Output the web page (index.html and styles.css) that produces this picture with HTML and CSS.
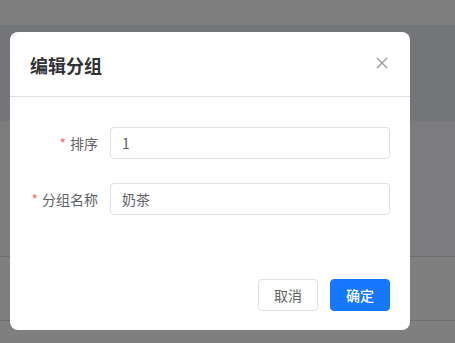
FILE: index.html
```html
<!DOCTYPE html>
<html lang="zh">
<head>
<meta charset="utf-8">
<link rel="stylesheet" href="styles.css">
</head>
<body>
<div class="page">
  <div class="topbar"></div>
  <div class="thead"></div>
  <div class="row row-tall"></div>
  <div class="row row-mid"></div>
  <div class="row row-last"></div>
</div>
<div class="mask">
  <div class="dialog">
    <div class="dialog-header">
      <span class="dialog-title">编辑分组</span>
      <svg class="close" width="12" height="12" viewBox="0 0 12 12"><path d="M1 1L11 11M11 1L1 11" stroke="#909399" stroke-width="1.2" fill="none"/></svg>
    </div>
    <div class="dialog-body">
      <div class="form-item">
        <label class="form-label"><span class="req">*</span>排序</label>
        <div class="input">1</div>
      </div>
      <div class="form-item">
        <label class="form-label"><span class="req">*</span>分组名称</label>
        <div class="input">奶茶</div>
      </div>
    </div>
    <div class="dialog-footer">
      <button class="btn">取消</button>
      <button class="btn btn-primary">确定</button>
    </div>
  </div>
</div>
</body>
</html>
```
FILE: styles.css
```css
* { box-sizing: border-box; }
html, body { margin: 0; padding: 0; overflow: hidden; }
body {
  width: 455px;
  height: 343px;
  font-family: "Noto Sans CJK SC", "Liberation Sans", sans-serif;
  position: relative;
  background: #fff;
}
.page { display: flex; flex-direction: column; height: 343px; overflow: hidden; }
.topbar { height: 25px; flex: none; background: #ffffff; }
.thead { height: 96px; flex: none; background: #e8ebf2; border-bottom: 1px solid #ebeef5; }
.row { height: 64px; flex: none; background: #fff; border-bottom: 1px solid #d8dce6; }
.row-tall { height: 136px; background: #f8f9fc; }
.row-last { flex: 1; border-bottom: none; }
.mask {
  position: absolute;
  inset: 0;
  background: rgba(0, 0, 0, 0.5);
  padding: 32px 0 0 10px;
}
.dialog {
  width: 400px;
  background: #fff;
  border-radius: 8px;
  overflow: hidden;
}
.dialog-header {
  height: 65px;
  padding: 0 22px 0 20px;
  display: flex;
  align-items: center;
  justify-content: space-between;
  border-bottom: 1px solid #dcdfe6;
}
.dialog-title {
  font-size: 18px;
  font-weight: 700;
  color: #303133;
  line-height: 24px;
  margin-top: 2px;
}
.close { display: block; margin-top: -3px; }
.dialog-body {
  padding: 30px 20px 0 20px;
  display: flex;
  flex-direction: column;
  gap: 24px;
}
.form-item { display: flex; align-items: center; height: 32px; }
.form-label {
  width: 80px;
  padding-right: 12px;
  text-align: right;
  font-size: 14px;
  color: #606266;
  line-height: 32px;
}
.req { color: #f56c6c; margin-right: 4px; }
.input {
  flex: 1;
  height: 32px;
  border: 1px solid #dcdfe6;
  border-radius: 4px;
  padding: 0 11px;
  font-size: 14px;
  color: #606266;
  line-height: 30px;
}
.dialog-footer {
  display: flex;
  justify-content: flex-end;
  gap: 12px;
  padding: 64px 20px 19px 20px;
}
.btn {
  width: 60px;
  height: 32px;
  border: 1px solid #dcdfe6;
  border-radius: 4px;
  background: #fff;
  color: #606266;
  font-family: inherit;
  font-size: 14px;
  padding: 0;
}
.btn-primary {
  background: #1677ff;
  border-color: #1677ff;
  color: #fff;
  font-weight: 500;
}
```
